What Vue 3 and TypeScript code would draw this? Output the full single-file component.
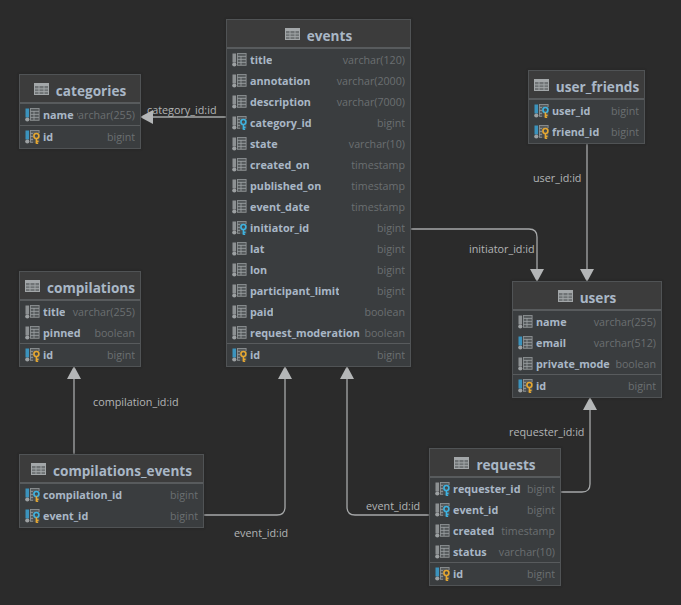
<script setup lang="ts">
type Col = { n: string; t: string; bar?: boolean; key?: "blue" | "gold" | "both"; clip?: number };
type Tbl = { name: string; x: number; y: number; w: number; cols: Col[]; pk?: Col };

const idCol: Col = { n: "id", t: "bigint", bar: true, key: "gold" };

const tables: Tbl[] = [
  {
    name: "categories", x: 20, y: 75, w: 120,
    cols: [{ n: "name", t: "varchar(255)", bar: true }],
    pk: idCol,
  },
  {
    name: "events", x: 227, y: 20, w: 183,
    cols: [
      { n: "title", t: "varchar(120)" },
      { n: "annotation", t: "varchar(2000)" },
      { n: "description", t: "varchar(7000)" },
      { n: "category_id", t: "bigint", key: "blue" },
      { n: "state", t: "varchar(10)" },
      { n: "created_on", t: "timestamp" },
      { n: "published_on", t: "timestamp", clip: 72 },
      { n: "event_date", t: "timestamp" },
      { n: "initiator_id", t: "bigint", key: "blue" },
      { n: "lat", t: "bigint" },
      { n: "lon", t: "bigint" },
      { n: "participant_limit", t: "bigint", clip: 89 },
      { n: "paid", t: "boolean" },
      { n: "request_moderation", t: "boolean" },
    ],
    pk: idCol,
  },
  {
    name: "user_friends", x: 529, y: 71, w: 115,
    cols: [
      { n: "user_id", t: "bigint", bar: true, key: "both" },
      { n: "friend_id", t: "bigint", bar: true, key: "gold" },
    ],
  },
  {
    name: "users", x: 513, y: 282, w: 148,
    cols: [
      { n: "name", t: "varchar(255)" },
      { n: "email", t: "varchar(512)", bar: true },
      { n: "private_mode", t: "boolean" },
    ],
    pk: idCol,
  },
  {
    name: "compilations", x: 20, y: 272, w: 120,
    cols: [
      { n: "title", t: "varchar(255)" },
      { n: "pinned", t: "boolean" },
    ],
    pk: idCol,
  },
  {
    name: "compilations_events", x: 20, y: 455, w: 183,
    cols: [
      { n: "compilation_id", t: "bigint", bar: true, key: "both" },
      { n: "event_id", t: "bigint", bar: true, key: "both" },
    ],
  },
  {
    name: "requests", x: 430, y: 449, w: 130,
    cols: [
      { n: "requester_id", t: "bigint", key: "blue" },
      { n: "event_id", t: "bigint", key: "blue" },
      { n: "created", t: "timestamp" },
      { n: "status", t: "varchar(10)" },
    ],
    pk: idCol,
  },
];

const edges = [
  "M227 117H150",
  "M587 143V272",
  "M410 229H529Q537 229 537 237V272",
  "M74 455V376",
  "M203 515H277Q285 515 285 507V376",
  "M430 515H355Q347 515 347 507V376",
  "M560 492H582Q590 492 590 484V407",
];

const arrows = [
  "140,117 153,110 153,124",
  "587,282 580,269 594,269",
  "537,282 530,269 544,269",
  "74,366 67,379 81,379",
  "285,366 278,379 292,379",
  "347,366 340,379 354,379",
  "590,397 583,410 597,410",
];

const labels = [
  { text: "category_id:id", x: 147, y: 110 },
  { text: "user_id:id", x: 533, y: 178 },
  { text: "initiator_id:id", x: 469, y: 249 },
  { text: "compilation_id:id", x: 93, y: 402 },
  { text: "event_id:id", x: 234, y: 533 },
  { text: "event_id:id", x: 366, y: 506 },
  { text: "requester_id:id", x: 509, y: 432 },
];

const keyTop = (k: string) => (k === "blue" || k === "both" ? "#3fb3e0" : "#e6a832");
const keyBottom = (k: string) => (k === "blue" ? "#3fb3e0" : "#e6a832");
</script>

<template>
  <div class="canvas">
    <svg class="wires" width="681" height="605" viewBox="0 0 681 605">
      <path v-for="d in edges" :key="d" :d="d" fill="none" stroke="#a6a8a9" stroke-width="1.3" />
      <polygon v-for="p in arrows" :key="p" :points="p" fill="#b4b6b7" />
    </svg>

    <span
      v-for="l in labels"
      :key="l.text + l.x"
      class="edge-label"
      :style="{ left: l.x + 'px', top: l.y + 'px' }"
    >{{ l.text }}</span>

    <div
      v-for="t in tables"
      :key="t.name"
      class="table"
      :style="{ left: t.x + 'px', top: t.y + 'px', width: t.w + 'px' }"
    >
      <div class="head">
        <svg class="head-icon" width="15" height="12" viewBox="0 0 15 12">
          <rect x="0.5" y="0.5" width="14" height="11" fill="#6f7375" stroke="#a3a7a9" />
          <rect x="0.5" y="0.5" width="14" height="2.5" fill="#a3a7a9" />
          <path d="M5 3V11.5M10 3V11.5M1 5.8H14M1 8.6H14" stroke="#a3a7a9" stroke-width="0.9" />
        </svg>
        <span class="head-name">{{ t.name }}</span>
      </div>

      <template v-for="(group, gi) in [t.cols, t.pk ? [t.pk] : []]" :key="gi">
        <div v-if="group.length" class="group" :class="{ pk: gi === 1 }">
          <div v-for="c in group" :key="c.n" class="row">
            <svg class="col-icon" width="15" height="14" viewBox="0 0 15 14">
              <rect x="0.5" y="0.5" width="3.6" height="9" :fill="c.bar ? '#3b93bd' : '#8d9193'" />
              <circle cx="2.3" cy="11.5" r="2.1" fill="#9da1a3" />
              <rect x="5.5" y="0.5" width="8.6" height="11.8" fill="#55595b" stroke="#8d9193" stroke-width="0.9" />
              <path d="M5.5 3.4H14M5.5 6.4H14M5.5 9.4H14M9 3V12" stroke="#9da1a3" stroke-width="0.8" />
              <g v-if="c.key">
                <rect x="8" y="3" width="7" height="11" fill="#3a3d3f" opacity="0.75" />
                <circle cx="11.4" cy="6" r="2.5" fill="none" :stroke="keyTop(c.key)" stroke-width="1.6" />
                <path d="M11.4 8.3V13.8M11.4 11.2H13.6M11.4 13.2H13.2" fill="none" :stroke="keyBottom(c.key)" stroke-width="1.6" />
              </g>
            </svg>
            <span
              class="col-name"
              :style="c.clip ? { maxWidth: c.clip + 'px' } : undefined"
            >{{ c.n }}</span>
            <span class="col-type"><span>{{ c.t }}</span></span>
          </div>
        </div>
      </template>
    </div>
  </div>
</template>

<style scoped>
.canvas {
  position: relative;
  width: 681px;
  height: 605px;
  overflow: hidden;
  background: #2b2b2b;
  font-family: "Open Sans", "Noto Sans", sans-serif;
}
.wires {
  position: absolute;
  left: 0;
  top: 0;
}
.edge-label {
  position: absolute;
  font-size: 10.8px;
  line-height: 16px;
  color: #b3b5b6;
  white-space: nowrap;
  transform: translateY(-50%);
}
.table {
  position: absolute;
  box-sizing: content-box;
  margin: -1px 0 0 -1px;
  padding-bottom: 1px;
  background: #3a3d3f;
  border: 1px solid #505355;
  box-shadow: 0 0 2px #242424;
}
.head {
  display: flex;
  align-items: center;
  justify-content: center;
  gap: 7px;
  height: 27px;
  background: #3c3c3c;
  border-bottom: 2px solid #585b5d;
  color: #a9b7c6;
  font-size: 13.6px;
  font-weight: 700;
}
.head-name {
  padding-top: 3px;
}
.group.pk {
  border-top: 1px solid #585b5d;
}
.row {
  display: flex;
  align-items: center;
  height: 21px;
  padding: 0 5px;
}
.col-icon {
  flex: none;
  margin-right: 3px;
}
.col-name {
  flex: none;
  overflow: hidden;
  color: #a9b7c6;
  font-size: 10.8px;
  font-weight: 700;
  white-space: nowrap;
}
.col-type {
  flex: 1;
  min-width: 0;
  display: flex;
  justify-content: flex-end;
  overflow: hidden;
  margin-left: 3px;
  color: #6b6f71;
  font-size: 10.7px;
  white-space: nowrap;
}
.col-type span {
  flex: none;
}
</style>
